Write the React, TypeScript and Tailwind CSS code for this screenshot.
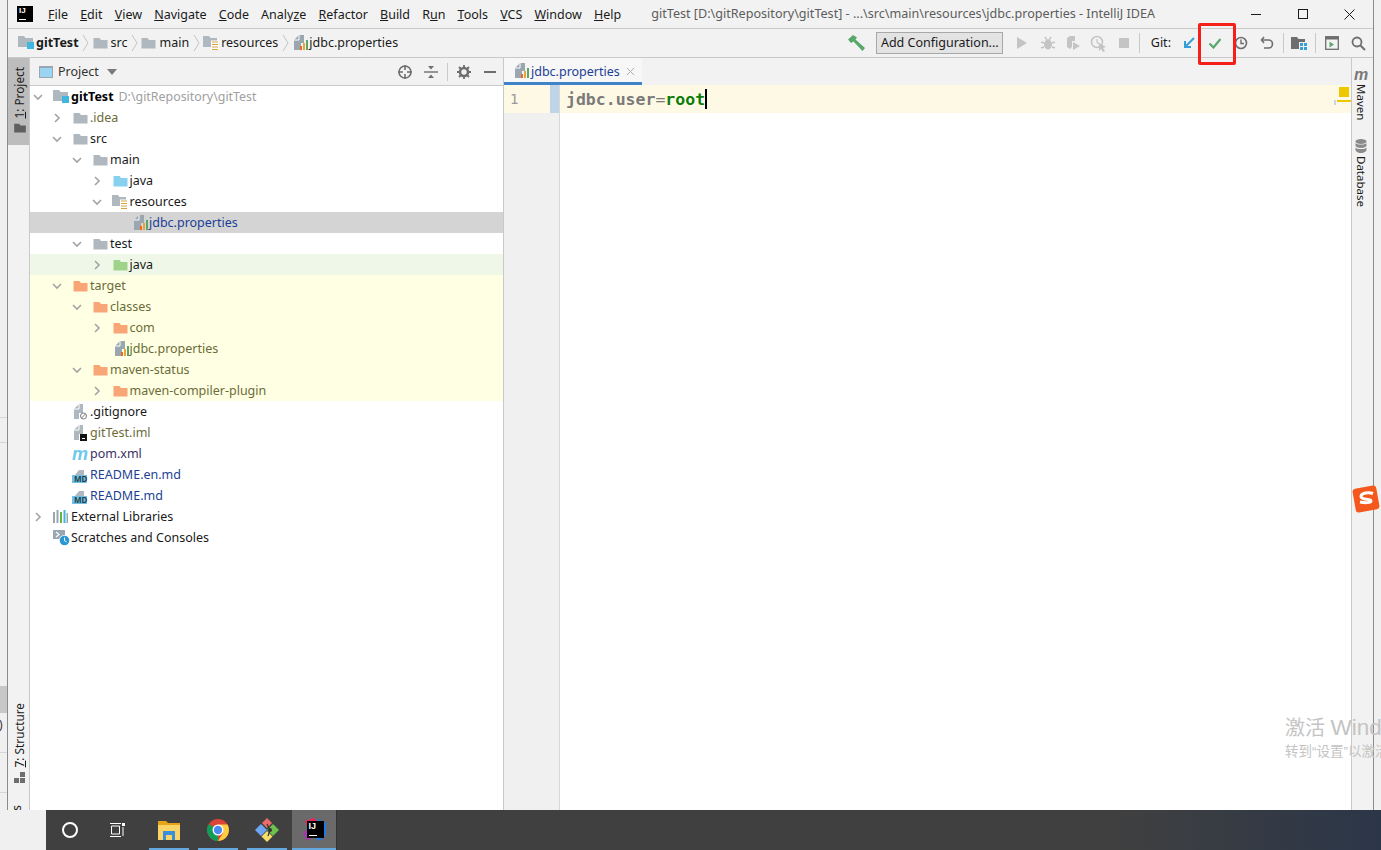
import type { ReactNode } from 'react';

const FOLDER = 'M0 1.5h6l1.5 2H14V12H0z';

function Folder({ color = '#afb8bf', className = '' }: { color?: string; className?: string }) {
  return (
    <svg width="15" height="12" viewBox="0 0 14 12" className={className}>
      <path d={FOLDER} fill={color} transform="translate(0 -.5)" />
    </svg>
  );
}

function ModuleFolder() {
  return (
    <svg width="18" height="16" viewBox="0 0 18 16">
      <path d="M0 1h6l1.5 2H15v9H0z" fill="#afb8bf" />
      <rect x="9" y="7" width="7" height="7" fill="#40b6e0" />
    </svg>
  );
}

function ResourceFolder() {
  return (
    <svg width="18" height="16" viewBox="0 0 18 16">
      <path d="M0 1h6l1.5 2H14v9H0z" fill="#afb8bf" />
      <rect x="8" y="5.5" width="8" height="9.5" fill="#fff" />
      <path d="M9 7h6M9 9.5h6M9 12h6M9 14.5h6" stroke="#d9a343" strokeWidth="1" />
    </svg>
  );
}

function PropsFile({ className = '' }: { className?: string }) {
  return (
    <svg width="15" height="16" viewBox="0 0 15 16" className={className}>
      <path d="M0 5l5-5h5v8H7v7H0z" fill="#9aa7b0" />
      <path d="M5 0v5H0" fill="none" stroke="#fff" strokeWidth="1" />
      <rect x="6" y="11" width="2" height="4" fill="#f26522" />
      <rect x="9" y="8" width="2" height="7" fill="#e8a33d" />
      <rect x="12" y="5" width="2" height="10" fill="#59a869" />
    </svg>
  );
}

function PlainFile({ badge }: { badge: 'ignore' | 'iml' }) {
  return (
    <svg width="16" height="16" viewBox="0 0 16 16" className="ml-[2px]">
      <path d="M0 5l5-5h4v15H0z" fill="#afb8bf" />
      <path d="M5 0v5H0" fill="none" stroke="#fff" strokeWidth="1" />
      <rect x="5" y="9" width="11" height="7" fill="#fff" />
      {badge === 'ignore' ? (
        <g fill="none" stroke="#7a7a7a" strokeWidth="1">
          <circle cx="9.5" cy="12" r="3" />
          <path d="M7.5 14l4-4" />
        </g>
      ) : (
        <>
          <rect x="6" y="9" width="7" height="7" fill="#111" />
          <rect x="8" y="13" width="3" height="1" fill="#fff" />
        </>
      )}
    </svg>
  );
}

function MdFile() {
  return (
    <span className="relative block h-[16px] w-[15px]">
      <svg width="15" height="16" viewBox="0 0 15 16" className="absolute left-0 top-0">
        <path d="M3 8l4-5h5v5z" fill="#afb8bf" />
        <rect x="0" y="8" width="15" height="8" fill="#6fc0e4" />
      </svg>
      <span className="absolute left-[2px] top-[8px] text-[8px] font-bold leading-[8px] text-[#27424f]">MD</span>
    </span>
  );
}

function MavenM({ color = '#6fc8ea', size = 'text-[18px]' }: { color?: string; size?: string }) {
  return (
    <span
      className={`block font-['Liberation_Sans',sans-serif] font-bold italic leading-none ${size}`}
      style={{ color }}
    >
      m
    </span>
  );
}

function Libraries() {
  return (
    <svg width="15" height="13" viewBox="0 0 15 13">
      <rect x="0" y="2" width="2" height="11" fill="#9aa7b0" />
      <rect x="3.5" y="0" width="2" height="13" fill="#9aa7b0" />
      <rect x="7" y="2" width="2" height="11" fill="#62b543" />
      <rect x="10.5" y="0" width="2" height="13" fill="#40b6e0" />
      <rect x="13.5" y="3" width="1.5" height="10" fill="#9aa7b0" />
    </svg>
  );
}

function Scratches() {
  return (
    <svg width="18" height="16" viewBox="0 0 18 16">
      <path d="M0 0h12v9H0z" fill="#9aa7b0" />
      <path d="M3 2l3 2.5L3 7" stroke="#fff" strokeWidth="1.2" fill="none" />
      <circle cx="11.5" cy="10.5" r="5.5" fill="#fff" />
      <circle cx="11.5" cy="10.5" r="4.8" fill="#2b98d4" />
      <path d="M11.5 7.5v3.2l2 1.2" stroke="#fff" strokeWidth="1" fill="none" />
    </svg>
  );
}

function Chevron({ open }: { open: boolean }) {
  return (
    <svg width="10" height="10" viewBox="0 0 10 10">
      <path
        d={open ? 'M1 3l4 4 4-4' : 'M3 1l4 4-4 4'}
        fill="none"
        stroke="#a3a3a3"
        strokeWidth="1.6"
      />
    </svg>
  );
}

type Row = {
  depth: number;
  arrow?: 'open' | 'closed';
  icon: ReactNode;
  label: string;
  extra?: string;
  bg?: string;
  text?: string;
};

const olive = 'text-[#6b6b37]';
const changed = 'bg-[#ffffe4]';
const orange = '#f8a676';
const dir = <Folder className="ml-[1px]" />;

const rows: Row[] = [
  { depth: 0, arrow: 'open', icon: <ModuleFolder />, label: 'gitTest', extra: 'D:\\gitRepository\\gitTest', text: 'font-bold text-black' },
  { depth: 1, arrow: 'closed', icon: dir, label: '.idea', text: olive },
  { depth: 1, arrow: 'open', icon: dir, label: 'src' },
  { depth: 2, arrow: 'open', icon: dir, label: 'main' },
  { depth: 3, arrow: 'closed', icon: <Folder color="#87d0ee" className="ml-[1px]" />, label: 'java' },
  { depth: 3, arrow: 'open', icon: <ResourceFolder />, label: 'resources' },
  { depth: 4, icon: <PropsFile className="ml-[3px]" />, label: 'jdbc.properties', bg: 'bg-[#d4d4d4]', text: 'text-[#1c3f94]' },
  { depth: 2, arrow: 'open', icon: dir, label: 'test' },
  { depth: 3, arrow: 'closed', icon: <Folder color="#9fd389" className="ml-[1px]" />, label: 'java', bg: 'bg-[#eff8e8]' },
  { depth: 1, arrow: 'open', icon: <Folder color={orange} className="ml-[1px]" />, label: 'target', bg: changed, text: olive },
  { depth: 2, arrow: 'open', icon: <Folder color={orange} className="ml-[1px]" />, label: 'classes', bg: changed, text: olive },
  { depth: 3, arrow: 'closed', icon: <Folder color={orange} className="ml-[1px]" />, label: 'com', bg: changed, text: olive },
  { depth: 3, icon: <PropsFile className="ml-[3px]" />, label: 'jdbc.properties', bg: changed, text: olive },
  { depth: 2, arrow: 'open', icon: <Folder color={orange} className="ml-[1px]" />, label: 'maven-status', bg: changed, text: olive },
  { depth: 3, arrow: 'closed', icon: <Folder color={orange} className="ml-[1px]" />, label: 'maven-compiler-plugin', bg: changed, text: olive },
  { depth: 1, icon: <PlainFile badge="ignore" />, label: '.gitignore' },
  { depth: 1, icon: <PlainFile badge="iml" />, label: 'gitTest.iml', text: olive },
  { depth: 1, icon: <MavenM />, label: 'pom.xml', text: 'text-[#3b2f63]' },
  { depth: 1, icon: <MdFile />, label: 'README.en.md', text: 'text-[#1c3f94]' },
  { depth: 1, icon: <MdFile />, label: 'README.md', text: 'text-[#1c3f94]' },
  { depth: 0, arrow: 'closed', icon: <Libraries />, label: 'External Libraries' },
  { depth: 0, icon: <Scratches />, label: 'Scratches and Consoles' },
];

const indent = ['pl-0', 'pl-[19px]', 'pl-[39px]', 'pl-[58.5px]', 'pl-[78px]'];

function TreeRow({ row }: { row: Row }) {
  return (
    <div className={`flex h-[21px] items-center ${indent[row.depth]} ${row.bg ?? ''}`}>
      <span className="flex w-[16px] justify-center">
        {row.arrow && <Chevron open={row.arrow === 'open'} />}
      </span>
      <span className="ml-[7px] flex w-[18px] shrink-0 items-center">{row.icon}</span>
      <span className={`translate-y-px whitespace-nowrap ${row.text ?? 'text-[#1a1a1a]'}`}>{row.label}</span>
      {row.extra && <span className="ml-[5px] translate-y-px whitespace-nowrap text-[12.4px] text-[#a0a0a0]">{row.extra}</span>}
    </div>
  );
}

const menus: [string, string, string][] = [
  ['', 'F', 'ile'],
  ['', 'E', 'dit'],
  ['', 'V', 'iew'],
  ['', 'N', 'avigate'],
  ['', 'C', 'ode'],
  ['Analy', 'z', 'e'],
  ['', 'R', 'efactor'],
  ['', 'B', 'uild'],
  ['R', 'u', 'n'],
  ['', 'T', 'ools'],
  ['', 'V', 'CS'],
  ['', 'W', 'indow'],
  ['', 'H', 'elp'],
];

function Crumb() {
  return (
    <svg width="7" height="18" viewBox="0 0 7 18" className="mx-[3.5px]">
      <path d="M1 1l5 8-5 8" fill="none" stroke="#c4c4c4" strokeWidth="1" />
    </svg>
  );
}

function ToolIcon({ children, wide = 'w-[26px]' }: { children: ReactNode; wide?: string }) {
  return <span className={`flex h-[26px] items-center justify-center ${wide}`}>{children}</span>;
}

function Sep({ space = 'mx-[2px]' }: { space?: string }) {
  return <span className={`h-[20px] w-px bg-[#c9c9c9] ${space}`} />;
}

function Toolbar() {
  return (
    <div className="ml-auto flex items-center pr-[2px]">
      <span className="mr-[10px] flex items-center">
        <svg width="18" height="16" viewBox="0 0 18 16">
          <path d="M0 4.500L5 0l4 2.500-1.500 2L17 13l-2.500 3-9-9.500L3 8z" fill="#59a869" />
        </svg>
      </span>
      <span className="flex h-[22px] w-[127px] items-center justify-center border border-[#a8a8a8] bg-[#e3e3e3] text-[#1a1a1a]">
        Add Configuration...
      </span>
      <span className="ml-[6px] flex items-center">
        <ToolIcon wide="w-[25.5px]">
          <svg width="14" height="14" viewBox="0 0 14 14"><path d="M2 1l10 6-10 6z" fill="#c4c4c4" /></svg>
        </ToolIcon>
        <ToolIcon wide="w-[25.5px]">
          <svg width="16" height="16" viewBox="0 0 16 16">
            <ellipse cx="8" cy="9.5" rx="4" ry="5" fill="#c4c4c4" />
            <path d="M5 2l2 3M11 2L9 5M1 7l3 1M15 7l-3 1M1 13l3-1M15 13l-3-1" stroke="#c4c4c4" strokeWidth="1.4" />
          </svg>
        </ToolIcon>
        <ToolIcon wide="w-[25.5px]">
          <svg width="16" height="16" viewBox="0 0 16 16">
            <path d="M2 3l3-2h5v5H7v6l-2 2-3-2z" fill="#c4c4c4" />
            <path d="M8 7l7 4-7 4z" fill="#c4c4c4" />
          </svg>
        </ToolIcon>
        <ToolIcon wide="w-[25.5px]">
          <svg width="17" height="17" viewBox="0 0 17 17">
            <circle cx="7" cy="7" r="5.5" fill="none" stroke="#c4c4c4" strokeWidth="1.5" />
            <path d="M7 4v3l2 2" stroke="#c4c4c4" strokeWidth="1.2" fill="none" />
            <path d="M9 8l7 4-3 1 2 3-2 1-2-3-2 2z" fill="#c4c4c4" />
          </svg>
        </ToolIcon>
        <ToolIcon wide="w-[25.5px]">
          <span className="block h-[10px] w-[10px] bg-[#c4c4c4]" />
        </ToolIcon>
      </span>
      <Sep />
      <span className="ml-[9px] mr-[5px] text-[#1a1a1a]">Git:</span>
      <ToolIcon>
        <svg width="14" height="14" viewBox="0 0 14 14">
          <path d="M12 2L3 11M3 5v6h6" fill="none" stroke="#389fd6" strokeWidth="2" />
        </svg>
      </ToolIcon>
      <ToolIcon>
        <svg width="14" height="12" viewBox="0 0 14 12">
          <path d="M1.500 6.500L5.500 10.500 12.500 2" fill="none" stroke="#59a869" strokeWidth="2.2" />
        </svg>
      </ToolIcon>
      <ToolIcon>
        <svg width="14" height="14" viewBox="0 0 14 14">
          <circle cx="7" cy="7" r="5.500" fill="none" stroke="#6e6e6e" strokeWidth="1.6" />
          <path d="M7 3.500V7.500h3" fill="none" stroke="#6e6e6e" strokeWidth="1.4" />
        </svg>
      </ToolIcon>
      <ToolIcon>
        <svg width="14" height="14" viewBox="0 0 14 14">
          <path d="M4 1L1.500 4 4 7" fill="none" stroke="#6e6e6e" strokeWidth="1.6" />
          <path d="M2 4h6.500a3.800 3.800 0 010 8H4" fill="none" stroke="#6e6e6e" strokeWidth="1.6" />
        </svg>
      </ToolIcon>
      <Sep space="mx-[2.5px]" />
      <ToolIcon>
        <svg width="16" height="14" viewBox="0 0 16 14">
          <path d="M0 1h6l1.500 2H14v3H8v7H0z" fill="#6e6e6e" />
          <path d="M9 7h3v3H9zM13 7h3v3h-3zM9 11h3v3H9zM13 11h3v3h-3z" fill="#389fd6" />
        </svg>
      </ToolIcon>
      <Sep space="mx-[3px]" />
      <ToolIcon>
        <svg width="14" height="14" viewBox="0 0 14 14">
          <rect x=".7" y=".7" width="12.600" height="12.600" fill="none" stroke="#6e6e6e" strokeWidth="1.3" />
          <rect x="1" y="1" width="12" height="2.500" fill="#6e6e6e" />
          <path d="M4.500 5.500l4.500 3-4.500 3z" fill="#59a869" />
        </svg>
      </ToolIcon>
      <ToolIcon>
        <svg width="15" height="15" viewBox="0 0 15 15">
          <circle cx="6" cy="6" r="4.500" fill="none" stroke="#6e6e6e" strokeWidth="1.8" />
          <path d="M9.500 9.500l4.500 4.500" stroke="#6e6e6e" strokeWidth="2" />
        </svg>
      </ToolIcon>
    </div>
  );
}

function LeftDesktop() {
  return (
    <div className="flex h-[810px] w-[7px] flex-col overflow-hidden bg-[#f0f0f0]">
      <div className="h-[418px] border-b border-[#d6d6d6]" />
      <div className="h-[25px] border-b border-[#d6d6d6]" />
      <div className="h-[270px] bg-[linear-gradient(to_bottom,#f0f0f0_90%,#c8c8c8_90%)]" />
      <div className="h-[40px] border-b border-[#d6d6d6] text-[12px] leading-[24px] text-[#333]">
        <span className="-ml-[1px]">)</span>
      </div>
      <div className="h-[40px] border-b border-[#d6d6d6]" />
    </div>
  );
}

function Task({ children }: { children: ReactNode }) {
  return (
    <div className="relative flex w-[40px] items-center justify-center">
      {children}
      <span className="absolute bottom-0 left-0 h-[2px] w-full bg-[#63a9e0]" />
    </div>
  );
}

export default function App() {
  return (
    <div className="relative h-[850px] w-[1381px] overflow-hidden bg-[#f0f0f0] font-['Noto_Sans','Open_Sans',sans-serif] text-[12.5px]">
      <div className="flex h-[810px]">
        <LeftDesktop />
        <div className="flex min-w-0 flex-1 flex-col border-x border-[#8a8a8a] bg-[#f2f2f2]">
          {/* title bar */}
          <div className="flex h-[28px] shrink-0 items-center text-[#1a1a1a]">
            <span className="relative ml-[9px] block h-[16px] w-[16px] bg-black">
              <span className="absolute left-[2px] top-0 font-['Liberation_Sans',sans-serif] text-[8px] font-bold leading-[10px] text-white">IJ</span>
              <span className="absolute bottom-[2px] left-[2px] h-px w-[7px] bg-white" />
            </span>
            <div className="ml-[15px] flex translate-y-px gap-[12.15px] whitespace-nowrap">
              {menus.map(([pre, key, post], i) => (
                <span key={i}>
                  {pre}
                  <span className="underline">{key}</span>
                  {post}
                </span>
              ))}
            </div>
            <span className="ml-[30px] whitespace-nowrap text-[12.6px] text-[#5c5c5c]">
              gitTest [D:\gitRepository\gitTest] - ...\src\main\resources\jdbc.properties - IntelliJ IDEA
            </span>
            <div className="ml-auto flex items-center text-[#1a1a1a]">
              <span className="flex w-[47px] justify-center"><span className="block h-px w-[10px] bg-[#1a1a1a]" /></span>
              <span className="flex w-[47px] justify-center"><span className="block h-[10px] w-[10px] border border-[#1a1a1a]" /></span>
              <span className="flex w-[47px] justify-center">
                <svg width="11" height="11" viewBox="0 0 11 11"><path d="M.5.500l10 10M10.500.500l-10 10" stroke="#1a1a1a" /></svg>
              </span>
            </div>
          </div>

          {/* navigation bar */}
          <div className="flex h-[30px] shrink-0 items-center border-y border-[#c9c9c9] pl-[10px] text-[#1a1a1a]">
            <ModuleFolder />
            <span className="font-bold">gitTest</span>
            <Crumb />
            <Folder />
            <span className="ml-[3px]">src</span>
            <Crumb />
            <Folder />
            <span className="ml-[3px]">main</span>
            <Crumb />
            <ResourceFolder />
            <span>resources</span>
            <Crumb />
            <PropsFile className="ml-[2px]" />
            <span>jdbc.properties</span>
            <Toolbar />
          </div>

          <div className="flex min-h-0 flex-1">
            {/* left tool strip */}
            <div className="relative flex w-[22px] shrink-0 flex-col items-center overflow-hidden border-r border-[#c9c9c9] text-[11.8px] text-[#1a1a1a]">
              <div className="flex h-[87px] w-full shrink-0 flex-col items-center bg-[#bdbdbd] pl-[3px] pt-[9px]">
                <span className="whitespace-nowrap [writing-mode:vertical-rl] rotate-180">
                  <span className="underline">1</span>: Project
                </span>
                <span className="mt-[4px]"><Folder color="#5f5f5f" className="h-[10px] w-[12px]" /></span>
              </div>
              <div className="mt-[558px] flex flex-col items-center pl-[3px]">
                <span className="whitespace-nowrap [writing-mode:vertical-rl] rotate-180">
                  <span className="underline">7</span>: Structure
                </span>
                <svg width="12" height="11" viewBox="0 0 12 11" className="mt-[5px]">
                  <path d="M6 0h5v5H6zM0 6h5v5H0zM6 6h5v5H6z" fill="#6e6e6e" />
                </svg>
              </div>
              <span className="mt-[22px] whitespace-nowrap pl-[3px] [writing-mode:vertical-rl] rotate-180">2: Favorites</span>
            </div>

            {/* project panel */}
            <div className="flex w-[474px] shrink-0 flex-col border-r border-[#c9c9c9] bg-white">
              <div className="flex h-[28px] shrink-0 items-center border-b border-[#c9c9c9] bg-[#f2f2f2] text-[#333]">
                <span className="ml-[9px] block h-[12px] w-[14px] border border-[#9aa7b0] border-t-[2px] bg-[#9ad6f3]" />
                <span className="ml-[5px] translate-y-px">Project</span>
                <svg width="10" height="6" viewBox="0 0 10 6" className="ml-[8px]"><path d="M0 0h10L5 6z" fill="#7a7a7a" /></svg>
                <div className="ml-auto flex items-center">
                  <svg width="16" height="16" viewBox="0 0 16 16">
                    <circle cx="8" cy="8" r="6" fill="none" stroke="#6e6e6e" strokeWidth="1.6" />
                    <path d="M8 1v5M8 10v5M1 8h5M10 8h5" stroke="#6e6e6e" strokeWidth="1.6" />
                  </svg>
                  <svg width="14" height="14" viewBox="0 0 14 14" className="ml-[11px]">
                    <path d="M0 7h14" stroke="#6e6e6e" strokeWidth="1.4" />
                    <path d="M4 1h6L7 4.500zM4 13h6L7 9.500z" fill="#6e6e6e" />
                  </svg>
                  <span className="mx-[9px] h-[18px] w-px bg-[#c9c9c9]" />
                  <svg width="14" height="14" viewBox="0 0 14 14">
                    <circle cx="7" cy="7" r="4" fill="none" stroke="#6e6e6e" strokeWidth="2.600" />
                    <path d="M7 0v3M7 11v3M0 7h3M11 7h3M2 2l2 2M10 10l2 2M12 2l-2 2M4 10l-2 2" stroke="#6e6e6e" strokeWidth="1.800" />
                  </svg>
                  <span className="ml-[13px] mr-[7px] block h-[2px] w-[12px] bg-[#6e6e6e]" />
                </div>
              </div>
              <div className="flex-1 overflow-hidden">
                {rows.map((r, i) => (
                  <TreeRow key={i} row={r} />
                ))}
              </div>
            </div>

            {/* editor */}
            <div className="flex min-w-0 flex-1 flex-col bg-white">
              <div className="flex h-[27px] shrink-0 bg-[#f2f2f2]">
                <div className="flex h-[27px] w-[138px] items-center border-b-[3px] border-[#4083c9] bg-[#f7f7f7] pl-[11px] text-[#1c3f94]">
                  <PropsFile className="translate-y-px" />
                  <span className="ml-[1px] translate-y-[2px]">jdbc.properties</span>
                  <svg width="9" height="9" viewBox="0 0 9 9" className="ml-[6px] translate-y-px"><path d="M1 1l7 7M8 1L1 8" stroke="#b0b0b0" /></svg>
                </div>
              </div>
              <div className="flex min-h-0 flex-1">
                <div className="w-[56px] shrink-0 border-r border-[#d8d8d8] bg-[#f0f0f0]">
                  <div className="flex h-[28px] bg-[#fef9e4]">
                    <span className="w-[46px] pl-[6px] font-['DejaVu_Sans_Mono',monospace] text-[14px] leading-[28px] text-[#9a9a9a]">1</span>
                    <span className="w-[9px] bg-[#bfd4e6]" />
                  </div>
                </div>
                <div className="relative min-w-0 flex-1">
                  <div className="flex h-[28px] items-center bg-[#fef9e4] pl-[6px] font-['DejaVu_Sans_Mono',monospace] text-[16.5px] font-bold">
                    <span className="translate-y-px text-[#7a7a7a]">jdbc.user</span>
                    <span className="translate-y-px font-normal text-[#7a7a7a]">=</span>
                    <span className="translate-y-px text-[#0a7d0a]">root</span>
                    <span className="h-[20px] w-[2px] bg-black" />
                  </div>
                  <span className="absolute right-[2px] top-[2px] block h-[10px] w-[10px] bg-[#edc800]" />
                  <span className="absolute right-0 top-[15px] block h-[2px] w-[14px] bg-[#edc800]" />
                  <span className="absolute right-[15px] top-[15px] block h-[5px] w-[2px] bg-[#c8d4ee]" />
                </div>
              </div>
            </div>

            {/* right tool strip */}
            <div className="flex w-[22px] shrink-0 flex-col items-center border-l border-[#c9c9c9] pr-[3px] pt-[9px] text-[11.5px] text-[#1a1a1a]">
              <MavenM color="#7a7a7a" size="text-[16px]" />
              <span className="mt-[1px] whitespace-nowrap [writing-mode:vertical-rl]">Maven</span>
              <svg width="12" height="14" viewBox="0 0 12 14" className="mt-[19px]">
                <ellipse cx="6" cy="2.500" rx="5.500" ry="2.500" fill="#8a8a8a" />
                <path d="M.5 4v2.500C.5 8 3 9 6 9s5.500-1 5.500-2.500V4C10 6 2 6 .5 4zM.5 8.500V11c0 1.500 2.500 3 5.500 3s5.500-1.500 5.500-3V8.500C10 10.500 2 10.500 .5 8.500z" fill="#8a8a8a" />
              </svg>
              <span className="mt-[3px] whitespace-nowrap [writing-mode:vertical-rl]">Database</span>
            </div>
          </div>
        </div>
        <div className="w-[7px] shrink-0 bg-[#f0f0f0]" />
      </div>

      {/* taskbar */}
      <div className="flex h-[40px] items-stretch">
        <div className="w-[46px] shrink-0 bg-[#f0f0f0]" />
        <div className="flex flex-1 items-stretch bg-[linear-gradient(to_right,#404040_0%,#404040_80%,#2b3648_100%)]">
          <span className="flex w-[48px] items-center justify-center">
            <span className="block h-[16px] w-[16px] rounded-full border-2 border-white" />
          </span>
          <span className="flex w-[46px] items-center justify-center">
            <svg width="16" height="14" viewBox="0 0 16 14">
              <path d="M1 .5h11M1 13.500h11M2.500 3h8v8h-8zM14 4v9" fill="none" stroke="#fff" />
              <rect x="13" y="0" width="3" height="3" fill="#fff" />
            </svg>
          </span>
          <div className="ml-[9px] flex gap-[9px]">
            <Task>
              <svg width="22" height="20" viewBox="0 0 22 20">
                <path d="M0 1h8l2 2h12v3H0z" fill="#e8a317" />
                <path d="M0 5h22v15H0z" fill="#fbd467" />
                <path d="M5 11h12v9h-3v-5H8v5H5z" fill="#3a8fdc" />
              </svg>
            </Task>
            <Task>
              <svg width="22" height="22" viewBox="0 0 22 22">
                <circle cx="11" cy="11" r="11" fill="#db4437" />
                <path d="M11 11L1.500 16.500A11 11 0 0 0 11 22z" fill="#0f9d58" />
                <path d="M1.500 16.500A11 11 0 0 1 2 5l9 6z" fill="#0f9d58" />
                <path d="M11 5.500h9.500A11 11 0 0 1 11 22l5-8z" fill="#ffcd40" />
                <circle cx="11" cy="11" r="5.500" fill="#fff" />
                <circle cx="11" cy="11" r="4.200" fill="#4a8cf0" />
              </svg>
            </Task>
            <Task>
              <svg width="24" height="24" viewBox="0 0 24 24">
                <path d="M12 0l5 5-5 5-5-5z" fill="#ef6b6b" />
                <path d="M0 12l6-6 6 6-6 6z" fill="#6ea6f2" />
                <path d="M18 6l6 6-6 6-6-6z" fill="#6cc24a" />
                <path d="M12 13l5.500 5.500L12 24l-5.500-5.500z" fill="#f5de6b" />
                <circle cx="15" cy="12" r="2" fill="#333" />
                <path d="M12 6l3 6M15 12l-2 6" stroke="#333" strokeWidth="1.200" />
              </svg>
            </Task>
          </div>
          <div className="relative ml-[5px] flex w-[44px] items-center justify-center bg-[#6a6a6a]">
            <svg width="24" height="24" viewBox="0 0 24 24" className="absolute left-[11px] top-[8px]">
              <path d="M2 3l9-3 3 4-9 8z" fill="#f0245c" />
              <path d="M0 14l6-3 2 10-5 1z" fill="#a23aa8" />
              <path d="M15 1l8 4v12l-6 6-5-3z" fill="#1d7ce8" />
            </svg>
            <span className="relative left-[1px] top-[-1px] block h-[17px] w-[17px] bg-black pl-[2px] font-['Liberation_Sans',sans-serif] text-[9px] font-bold leading-[11px] text-white">
              IJ
              <span className="absolute bottom-[2px] left-[2px] h-px w-[8px] bg-white" />
            </span>
            <span className="absolute bottom-0 left-0 h-[2px] w-full bg-[#63a9e0]" />
          </div>
          <span className="w-px bg-[#333]" />
        </div>
      </div>

      {/* red highlight, sogou badge and activation watermark lie over the page */}
      <span className="absolute left-[1198px] top-[23px] h-[42px] w-[38px] rounded-[2px] border-[3px] border-[#f5201a]" />
      <svg width="28" height="28" viewBox="0 0 28 28" className="absolute left-[1352px] top-[485px]">
        <rect x="2" y="2" width="24" height="24" rx="3" fill="#f4581c" transform="rotate(-10 14 14)" />
        <path d="M21 8.500c-4-1.500-12-1-12 3 0 4 10 1.500 10 4.500 0 2-6 2-11 1" fill="none" stroke="#fff" strokeWidth="3" />
      </svg>
      <div className="pointer-events-none absolute left-[1285px] top-[714px] whitespace-nowrap font-['Liberation_Sans','Noto_Sans_CJK_SC',sans-serif] text-[#c4c4c4]">
        <div className="text-[20px] leading-[27px]">激活 <span className="text-[22.5px]">Windows</span></div>
        <div className="text-[13.5px] leading-[20px]">转到“设置”以激活 Windows。</div>
      </div>
    </div>
  );
}
